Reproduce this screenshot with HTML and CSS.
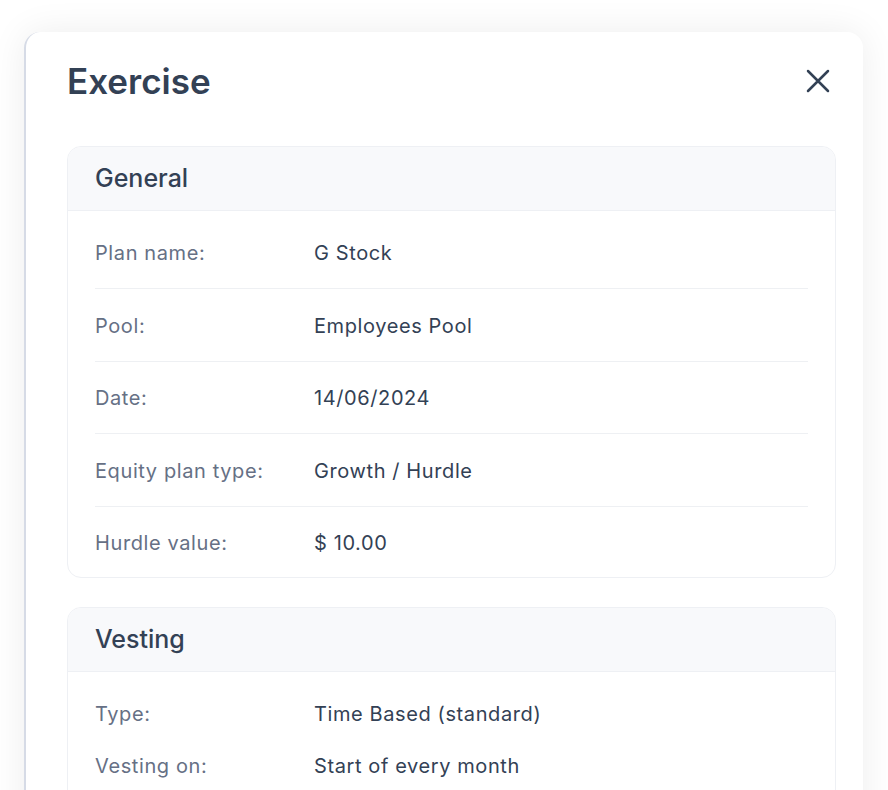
FILE: index.html
```html
<!DOCTYPE html>
<html lang="en">
<head>
<meta charset="utf-8">
<link rel="stylesheet" href="styles.css">
</head>
<body>
<div class="modal">
  <div class="modal-head">
    <h1 class="title">Exercise</h1>
    <button class="close" aria-label="Close">
      <svg width="24" height="24" viewBox="0 0 24 24" fill="none" stroke="#334155" stroke-width="2.5" stroke-linecap="round"><path d="M2 2L22 22M22 2L2 22"/></svg>
    </button>
  </div>

  <section class="card">
    <div class="card-head">General</div>
    <div class="card-body">
      <div class="row"><span class="label">Plan name:</span><span class="value">G Stock</span></div>
      <div class="row"><span class="label">Pool:</span><span class="value">Employees Pool</span></div>
      <div class="row"><span class="label">Date:</span><span class="value">14/06/2024</span></div>
      <div class="row"><span class="label">Equity plan type:</span><span class="value">Growth / Hurdle</span></div>
      <div class="row last"><span class="label">Hurdle value:</span><span class="value">$ 10.00</span></div>
    </div>
  </section>

  <section class="card">
    <div class="card-head">Vesting</div>
    <div class="card-body plain">
      <div class="row"><span class="label">Type:</span><span class="value">Time Based (standard)</span></div>
      <div class="row"><span class="label">Vesting on:</span><span class="value">Start of every month</span></div>
    </div>
  </section>
</div>
</body>
</html>
```
FILE: styles.css
```css
html, body {
  margin: 0;
  padding: 0;
  background: #ffffff;
  overflow: hidden;
  height: 790px;
}
body {
  font-family: Inter, "Noto Sans", sans-serif;
  color: #334155;
  padding: 32px 24px 0 24px;
  box-sizing: border-box;
}
.modal {
  width: 839px;
  height: 900px;
  box-sizing: border-box;
  background: #ffffff;
  border-radius: 16px;
  border-left: 2px solid #d6dbe6;
  box-shadow: 0 0 36px rgba(0, 0, 0, 0.075);
  padding: 27px 27px 0 41px;
}
.modal-head {
  display: flex;
  align-items: center;
  justify-content: space-between;
  height: 44px;
}
.title {
  margin: 0;
  font-size: 35px;
  line-height: 44px;
  font-weight: 600;
  color: #334155;
  letter-spacing: 0;
}
.close {
  background: none;
  border: 0;
  padding: 0;
  width: 24px;
  height: 24px;
  margin-right: 6px;
  display: flex;
  align-items: center;
  justify-content: center;
}
.card {
  margin-top: 43px;
  border: 1px solid #eef0f4;
  border-radius: 14px;
  overflow: hidden;
}
.card + .card {
  margin-top: 29px;
}
.card-head {
  height: 64px;
  box-sizing: border-box;
  display: flex;
  align-items: center;
  padding: 0 27px 2px;
  background: #f8f9fb;
  border-bottom: 1px solid #eef0f4;
  font-size: 25px;
  font-weight: 500;
  color: #334155;
}
.card-body {
  padding: 5.5px 27px 0 27px;
}
.row {
  display: flex;
  align-items: center;
  padding: 24.5px 0 21.5px;
  line-height: 25.5px;
  font-size: 20px;
  letter-spacing: 0.6px;
  border-bottom: 1px solid #eef0f3;
}
.row.last {
  border-bottom: 0;
  padding-bottom: 20.5px;
}
.label {
  width: 219px;
  flex: none;
  color: #667085;
}
.value {
  color: #334155;
}
.card-body.plain {
  padding-top: 29px;
  padding-bottom: 40px;
  display: flex;
  flex-direction: column;
  gap: 26px;
}
.card-body.plain .row {
  padding: 0;
  border-bottom: 0;
  line-height: 26px;
}
```
